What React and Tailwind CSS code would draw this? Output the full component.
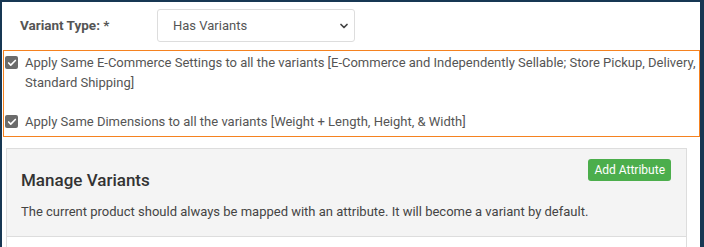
import { ChevronDown, Check } from "lucide-react";

function CheckRow({ children }) {
  return (
    <label className="flex items-start gap-[7px]">
      <span className="mt-[3px] flex h-[13px] w-[13px] shrink-0 items-center justify-center rounded-[2px] bg-[#6b6b6b]">
        <Check className="h-[10px] w-[10px] text-white" strokeWidth={4} />
      </span>
      <span className="leading-[20px]">{children}</span>
    </label>
  );
}

export default function App() {
  return (
    <div className="h-[247px] w-[704px] overflow-hidden bg-[#173753] pl-[2px] pr-[4px] pt-[2px] font-['Roboto',sans-serif]">
      <div className="h-full bg-white">
        <div className="flex items-center pl-[18px] pt-[7px]">
          <div className="w-[137px] text-[13.5px] font-bold text-[#555]">Variant Type: *</div>
          <div className="flex h-[33px] w-[198px] items-center justify-between rounded-[3px] border border-[#ddd] pl-[15px] pr-[4px] text-[13px] text-[#555]">
            <span>Has Variants</span>
            <ChevronDown className="h-[12px] w-[12px] text-[#444]" strokeWidth={3.5} />
          </div>
        </div>

        <div className="ml-[1px] mt-[8px] h-[87px] border border-[#f58220] pl-[1px] pt-[2px] text-[13px] text-[#555]">
          <CheckRow>
            Apply Same E-Commerce Settings to all the variants [E-Commerce and Independently Sellable; Store Pickup, Delivery,
            <br />
            Standard Shipping]
          </CheckRow>
          <div className="mt-[19px]">
            <CheckRow>Apply Same Dimensions to all the variants [Weight + Length, Height, &amp; Width]</CheckRow>
          </div>
        </div>

        <div className="ml-[4px] mr-[13px] mt-[11px] border border-b-0 border-[#ddd]">
          <div className="border-b border-[#ddd] bg-[#f4f4f4] px-[14px] pb-[15px] pt-[10px]">
            <div className="flex items-start justify-between">
              <h3 className="mt-[9px] text-[17px] font-medium text-[#333]">Manage Variants</h3>
              <button className="mr-[1px] h-[22px] rounded-[3px] bg-[#4cae4c] px-[6px] text-[12px] text-white">
                Add Attribute
              </button>
            </div>
            <p className="mt-[8px] text-[13px] text-[#444]">
              The current product should always be mapped with an attribute. It will become a variant by default.
            </p>
          </div>
          <div className="h-[20px] bg-white" />
        </div>
      </div>
    </div>
  );
}
